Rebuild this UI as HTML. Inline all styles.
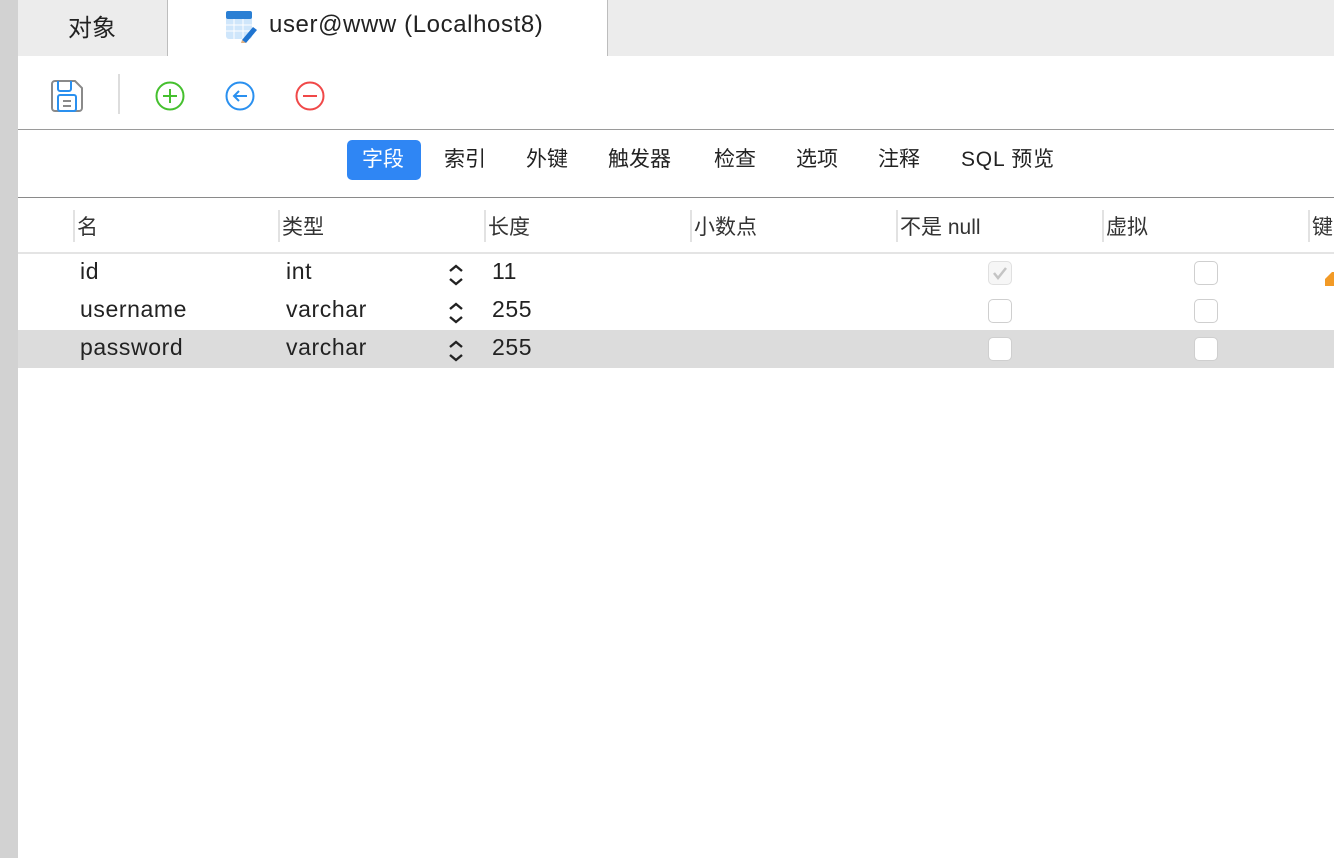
<!DOCTYPE html>
<html><head><meta charset="utf-8"><style>
*{margin:0;padding:0;box-sizing:border-box}
body{width:1334px;height:858px;position:relative;background:#fff;font-family:"Liberation Sans","Noto Sans CJK SC",sans-serif;color:#222;overflow:hidden}
.a{position:absolute}
.t{white-space:nowrap}
.sep{position:absolute;top:210px;width:2px;height:32px;background:#e2e2e2}
.h{position:absolute;top:211px;font-size:21px;color:#333;white-space:nowrap}
.c{position:absolute;font-size:23px;letter-spacing:0.6px;color:#222;white-space:nowrap}
.cb{position:absolute;width:24px;height:24px;border:1px solid #cfcfcf;border-radius:5px;background:#fff}
.st{position:absolute;font-size:21px;color:#222;top:143px;white-space:nowrap}
</style></head><body>
<div class="a" style="left:0;top:0;width:18px;height:858px;background:#d2d2d2"></div>
<div class="a" style="left:18px;top:0;width:1316px;height:56px;background:#ececec"></div>
<div class="a" style="left:167px;top:0;width:1px;height:56px;background:#bdbdbd"></div>
<div class="a" style="left:168px;top:0;width:439px;height:56px;background:#fff"></div>
<div class="a" style="left:607px;top:0;width:1px;height:56px;background:#bdbdbd"></div>
<div class="a t" style="left:68px;top:8px;font-size:24px">对象</div>
<svg class="a" style="left:225px;top:10px" width="34" height="34" viewBox="0 0 34 34">
<rect x="1" y="1" width="26" height="28" rx="3" fill="#cfe6fb"/>
<rect x="1" y="1" width="26" height="8" rx="2" fill="#2a7fd4"/>
<path d="M1 15h26M1 21h26M9 9v20M18 9v20" stroke="#fff" stroke-width="1"/>
<path d="M17 30 L28 17 L32 20 L21 33 Z" fill="#1f74d0"/>
<path d="M16 33 L17 30 L21 33Z" fill="#e0b080"/>
</svg>
<div class="a t" style="left:269px;top:11px;font-size:24px;letter-spacing:0.6px">user@www (Localhost8)</div>

<svg class="a" style="left:51px;top:79px" width="34" height="34" viewBox="0 0 34 34">
<path d="M4 2h20l7 7v20a3 3 0 0 1-3 3H4a3 3 0 0 1-3-3V5a3 3 0 0 1 3-3z" fill="none" stroke="#8a8a8a" stroke-width="2"/>
<path d="M7 2v8a2 2 0 0 0 2 2h9a2 2 0 0 0 2-2V2" fill="none" stroke="#2a90ef" stroke-width="2"/>
<rect x="7" y="16" width="18" height="16" rx="2" fill="none" stroke="#2a90ef" stroke-width="2"/>
<path d="M12 22h8M12 27h8" stroke="#8a8a8a" stroke-width="2"/>
</svg>
<div class="a" style="left:118px;top:74px;width:2px;height:40px;background:#ddd"></div>
<svg class="a" style="left:154px;top:80px" width="32" height="32"><circle cx="16" cy="16" r="13.5" fill="none" stroke="#45c02e" stroke-width="2"/><path d="M16 9v14M9 16h14" stroke="#45c02e" stroke-width="2"/></svg>
<svg class="a" style="left:224px;top:80px" width="32" height="32"><circle cx="16" cy="16" r="13.5" fill="none" stroke="#2a90ef" stroke-width="2"/><path d="M23 16H10M15 11l-5 5 5 5" fill="none" stroke="#2a90ef" stroke-width="2"/></svg>
<svg class="a" style="left:294px;top:80px" width="32" height="32"><circle cx="16" cy="16" r="13.5" fill="none" stroke="#f04848" stroke-width="2"/><path d="M9 16h14" stroke="#f04848" stroke-width="2"/></svg>
<div class="a" style="left:18px;top:129px;width:1316px;height:1px;background:#9a9a9a"></div>

<div class="a" style="left:347px;top:140px;width:74px;height:40px;background:#2f86f4;border-radius:5px"></div>
<div class="st" style="left:362px;color:#fff">字段</div>
<div class="st" style="left:444px">索引</div>
<div class="st" style="left:526px">外键</div>
<div class="st" style="left:608px">触发器</div>
<div class="st" style="left:714px">检查</div>
<div class="st" style="left:796px">选项</div>
<div class="st" style="left:878px">注释</div>
<div class="st" style="left:961px;letter-spacing:0.8px">SQL 预览</div>
<div class="a" style="left:18px;top:197px;width:1316px;height:1px;background:#8a8a8a"></div>

<div class="sep" style="left:73px"></div><div class="h" style="left:77px">名</div>
<div class="sep" style="left:278px"></div><div class="h" style="left:282px">类型</div>
<div class="sep" style="left:484px"></div><div class="h" style="left:488px">长度</div>
<div class="sep" style="left:690px"></div><div class="h" style="left:694px">小数点</div>
<div class="sep" style="left:896px"></div><div class="h" style="left:900px">不是 null</div>
<div class="sep" style="left:1102px"></div><div class="h" style="left:1106px">虚拟</div>
<div class="sep" style="left:1308px"></div><div class="h" style="left:1312px">键</div>
<div class="a" style="left:18px;top:252px;width:1316px;height:2px;background:#e4e4e4"></div>

<div class="a" style="left:18px;top:330px;width:1316px;height:38px;background:#dcdcdc"></div>

<div class="c" style="left:80px;top:258px">id</div>
<div class="c" style="left:286px;top:258px">int</div>
<div class="c" style="left:492px;top:258px">11</div>
<div class="c" style="left:80px;top:296px">username</div>
<div class="c" style="left:286px;top:296px">varchar</div>
<div class="c" style="left:492px;top:296px">255</div>
<div class="c" style="left:80px;top:334px">password</div>
<div class="c" style="left:286px;top:334px">varchar</div>
<div class="c" style="left:492px;top:334px">255</div>

<svg class="a" style="left:447px;top:263px" width="18" height="24"><path d="M3 8l6-5 6 5M3 16l6 5 6-5" fill="none" stroke="#222" stroke-width="2.4"/></svg>
<svg class="a" style="left:447px;top:301px" width="18" height="24"><path d="M3 8l6-5 6 5M3 16l6 5 6-5" fill="none" stroke="#222" stroke-width="2.4"/></svg>
<svg class="a" style="left:447px;top:339px" width="18" height="24"><path d="M3 8l6-5 6 5M3 16l6 5 6-5" fill="none" stroke="#222" stroke-width="2.4"/></svg>

<div class="cb" style="left:988px;top:261px;background:#f6f6f6;border-color:#e0e0e0"></div>
<svg class="a" style="left:988px;top:261px" width="24" height="24"><path d="M6 12l4 5 8-10" fill="none" stroke="#c4c4c4" stroke-width="2.5"/></svg>
<div class="cb" style="left:1194px;top:261px"></div>
<div class="cb" style="left:988px;top:299px"></div>
<div class="cb" style="left:1194px;top:299px"></div>
<div class="cb" style="left:988px;top:337px"></div>
<div class="cb" style="left:1194px;top:337px"></div>
<svg class="a" style="left:1325px;top:272px" width="9" height="14"><path d="M0 14V7L7 0h2v14z" fill="#f29a26"/></svg>
</body></html>
